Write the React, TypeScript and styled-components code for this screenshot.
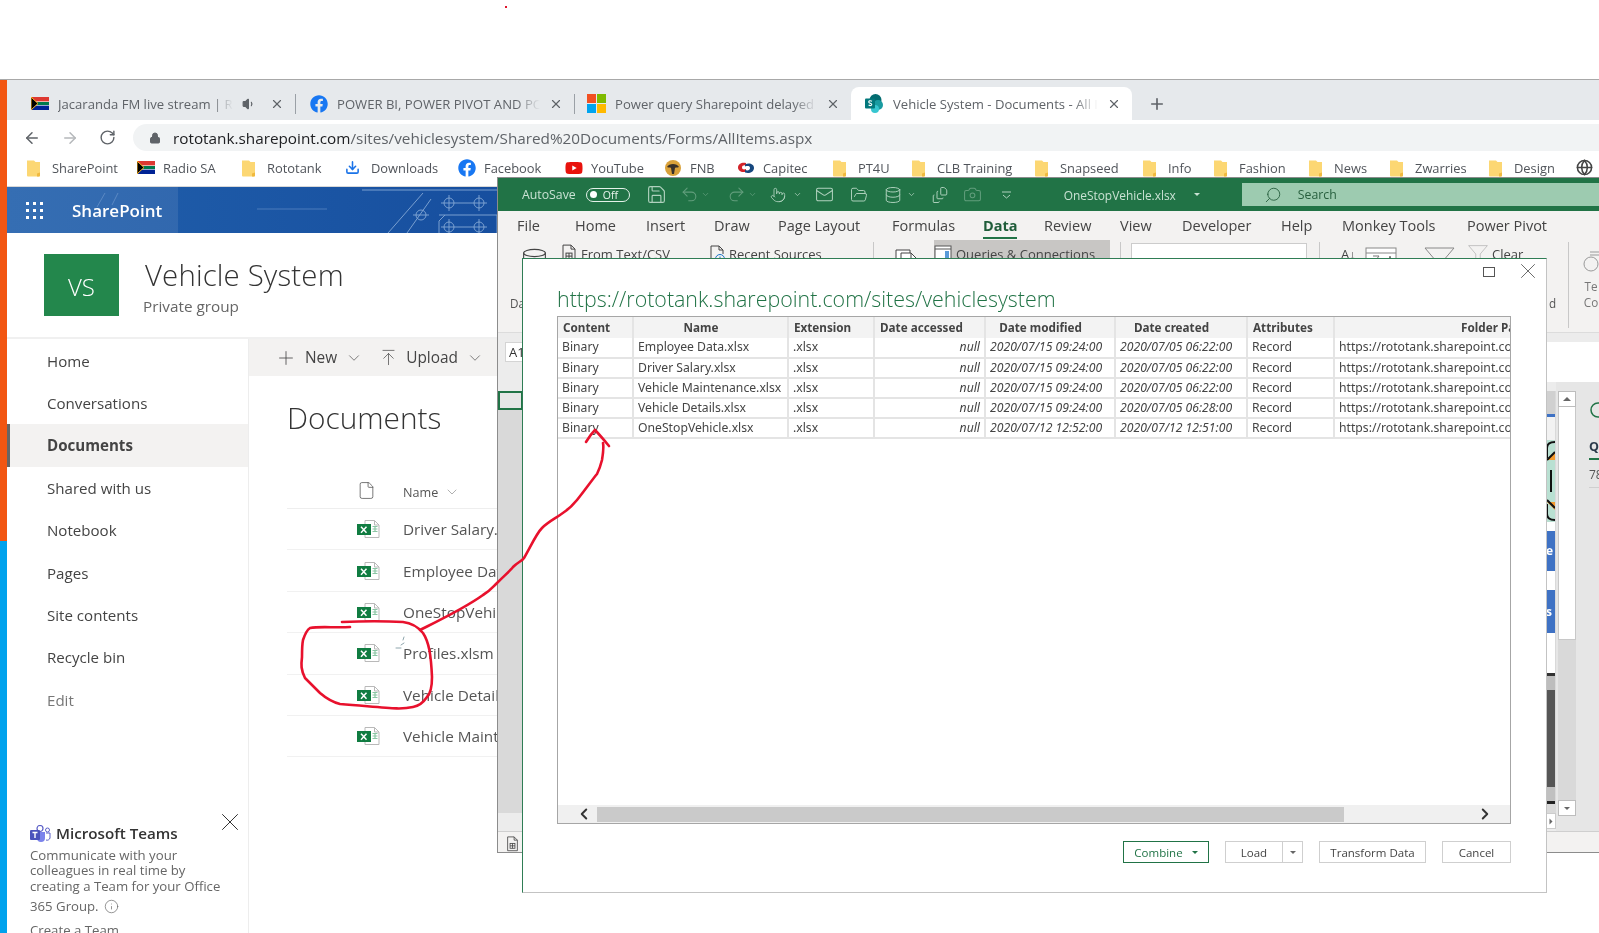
import React from "react";
import styled, { createGlobalStyle } from "styled-components";
import { FaFacebook, FaYoutube } from "react-icons/fa";
import { Save, Undo2, Redo2, Pointer, Mail, FolderOpen, Database, Camera, FileStack, Search, ArrowLeft, ArrowRight, RotateCw, Lock, Plus, X, ChevronDown, ChevronLeft, ChevronRight, ArrowUpToLine, File as FileIcon, Info, Volume1, Globe, Download } from "lucide-react";

const Global = createGlobalStyle`
  html, body { margin: 0; padding: 0; background: #fff; }
  body { font-family: "Open Sans", "Noto Sans", sans-serif; color: #333; }
  * { box-sizing: border-box; }
`;

const Page = styled.div`position: relative; width: 1599px; height: 933px; overflow: hidden; background: #fff; filter: blur(0.35px);`;
const TopGap = styled.div`height: 80px; border-bottom: 1px solid #a8a8a8;`;
const Browser = styled.div`display: flex; height: 853px;`;
const Strip = styled.div`width: 7px; flex: none; background: linear-gradient(#f25612 0, #f25612 461px, #00a2ed 461px);`;
const Chrome = styled.div`flex: 1; display: flex; flex-direction: column; min-width: 0;`;

const TabBar = styled.div`height: 40px; flex: none; background: #e6e9ec; display: flex; padding: 7px 0 0 9px; color: #5f6368;`;
const Tab = styled.div<{ $w: number; $pl?: number; $active?: boolean }>`
  width: ${p => p.$w}px; height: 33px; flex: none; display: flex; align-items: center; padding: 0 11px 0 ${p => p.$pl ?? 15}px; gap: 9px; position: relative;
  background: ${p => (p.$active ? "#fff" : "transparent")}; border-radius: 8px 8px 0 0; font-size: 13.1px;
`;
const TabSep = styled.div`width: 1px; height: 20px; background: #9aa0a6; flex: none; margin-top: 7px;`;
const TabTitle = styled.div`flex: 1; white-space: nowrap; overflow: hidden; min-width: 0; -webkit-mask-image: linear-gradient(90deg, #000 88%, transparent); mask-image: linear-gradient(90deg, #000 88%, transparent);`;
const NewTab = styled.div`display: flex; align-items: center; height: 33px; margin-left: 16px; color: #5f6368;`;

const Toolbar = styled.div`height: 35px; flex: none; display: flex; align-items: center; padding-left: 16px; gap: 20px; color: #5f6368;`;
const Omni = styled.div`flex: 1; height: 27px; margin-left: -3px; background: #f1f3f4; border-radius: 14px 0 0 14px; display: flex; align-items: center; padding-left: 16px; gap: 12px; font-size: 15.3px; white-space: nowrap; color: #5f6368;`;
const Host = styled.span`color: #202124;`;

const Bookmarks = styled.div`height: 32px; flex: none; display: flex; align-items: center; padding: 0 0 6px 19px; font-size: 12.9px; color: #50545a; border-bottom: 1px solid #d8d8d8;`;
const Bookmark = styled.div<{ $w: number }>`width: ${p => p.$w}px; flex: none; display: flex; align-items: center; gap: 8px; white-space: nowrap;`;
const BmIcon = styled.span`width: 18px; height: 18px; display: flex; align-items: center; flex: none;`;

const SpBar = styled.div`position: relative; height: 46px; flex: none; overflow: hidden; background: #1c5aa8; display: flex; align-items: center; color: #fff;`;
const SpArt = styled.svg`position: absolute; inset: 0; width: 100%; height: 100%;`;
const Waffle = styled.div`position: relative; display: grid; grid-template-columns: repeat(3, 3px); gap: 4px; margin-left: 19px;`;
const Dot = styled.i`width: 3px; height: 3px; background: #fff; display: block;`;
const SpName = styled.div`position: relative; margin-left: 29px; font-size: 17px; font-weight: 600;`;

const SiteHead = styled.div`height: 106px; flex: none; display: flex; align-items: flex-start; padding: 21px 0 0 37px; border-bottom: 2px solid #f0f0f0;`;
const Tile = styled.div`width: 75px; height: 62px; background: #23874c; color: #fff; font-size: 24px; font-weight: 300; display: flex; align-items: center; justify-content: center; flex: none; padding-top: 2px;`;
const SiteText = styled.div`margin-left: 26px; padding-top: 2px;`;
const SiteTitle = styled.div`font-size: 29.4px; font-weight: 300; line-height: 39px; color: #333; letter-spacing: .15px;`;
const SiteSub = styled.div`font-size: 15.3px; color: #666; line-height: 20px; margin: 1px 0 0 -2px;`;

const Body = styled.div`flex: 1; display: flex; min-height: 0;`;
const Nav = styled.nav`width: 242px; flex: none; border-right: 1px solid #ededed; display: flex; flex-direction: column; padding-top: .5px;`;
const NavItem = styled.div<{ $on?: boolean; $muted?: boolean }>`
  height: 42.4px; flex: none; display: flex; align-items: center; padding-left: ${p => (p.$on ? 37 : 40)}px; font-size: 15.1px;
  color: ${p => (p.$muted ? "#777" : "#444")}; font-weight: ${p => (p.$on ? 700 : 400)}; background: ${p => (p.$on ? "#f3f2f1" : "transparent")};
  border-left: ${p => (p.$on ? "3px solid #666" : "none")};
`;
const Teams = styled.div`position: relative; margin: 103px 0 0 23px; font-size: 13.2px; line-height: 15.4px; color: #666;`;
const TeamsHead = styled.div`display: flex; align-items: center; gap: 5px; font-size: 15.2px; font-weight: 600; color: #333; height: 20px; margin-bottom: 4px;`;
const TeamsClose = styled.span`position: absolute; right: 3px; top: -17px; color: #333; display: flex;`;
const InfoLine = styled.div`display: flex; align-items: center; gap: 5px; margin-top: 5px;`;
const CreateLink = styled.div`margin-top: 8px;`;

const Main = styled.div`flex: 1; min-width: 0;`;
const Cmd = styled.div`height: 37px; background: #f3f2f1; display: flex; align-items: center; padding-left: 26px; font-size: 15.4px; color: #333;`;
const CmdBtn = styled.div<{ $ml?: number }>`display: flex; align-items: center; margin-left: ${p => p.$ml ?? 0}px; gap: 8px; color: #444;`;
const DocTitle = styled.div`font-size: 29.8px; font-weight: 300; color: #333; line-height: 38px; padding: 23px 0 0 38px; height: 105px;`;
const ListHead = styled.div`height: 28px; margin-left: 38px; display: flex; align-items: flex-start; font-size: 12.6px; color: #555; border-bottom: 1px solid #eee; padding-left: 70px;`;
const ListName = styled.div`margin-left: 27px; display: flex; align-items: center; gap: 6px; height: 18px; margin-top: 2px;`;
const FileRow = styled.div`height: 41.4px; margin-left: 38px; display: flex; align-items: center; border-bottom: 1px solid #f1f1f1; padding-left: 70px; font-size: 15.3px; color: #555; white-space: nowrap;`;
const FileName = styled.div`margin-left: 23px;`;

/* Excel window */
const Excel = styled.div`position: absolute; left: 497px; top: 177px; width: 1102px; height: 676px; border: 1px solid #8c8c8c; border-right: 0; background: #f3f2f1; display: flex; flex-direction: column;`;
const XTitle = styled.div`height: 33px; flex: none; background: #217346; display: flex; align-items: center; color: #c9e2d3; font-size: 12.3px; padding-left: 24px; white-space: nowrap;`;
const Toggle = styled.div`width: 44px; height: 14px; border: 1.5px solid #e4f1e9; border-radius: 8px; margin-left: 10px; display: flex; align-items: center; padding-left: 3px; font-size: 10.5px; color: #e9f4ed; gap: 6px;`;
const Knob = styled.i`width: 7px; height: 7px; background: #fff; border-radius: 50%; display: block;`;
const TIcon = styled.span<{ $x: number; $dim?: boolean }>`margin-left: ${p => p.$x}px; display: flex; opacity: ${p => (p.$dim ? 0.38 : 0.85)};`;
const XFile = styled.div`margin-left: 52px; display: flex; align-items: center; gap: 18px; width: 178px; flex: none; font-size: 11.9px;`;
const Caret = styled.i`width: 0; height: 0; border-left: 3.5px solid transparent; border-right: 3.5px solid transparent; border-top: 3.5px solid currentColor; display: block;`;
const XSearch = styled.div`flex: 1; height: 23px; background: #9dcbb0; display: flex; align-items: center; padding-left: 22px; gap: 16px; color: #28603f; font-size: 12.3px;`;
const XTabs = styled.div`height: 29px; flex: none; display: flex; align-items: center; padding-left: 19px; font-size: 14.5px; color: #444;`;
const XTab = styled.div<{ $w: number; $on?: boolean }>`width: ${p => p.$w}px; flex: none; white-space: nowrap; position: relative; font-weight: ${p => (p.$on ? 700 : 400)}; color: ${p => (p.$on ? "#1f5d3a" : "#444")};
  &::after { content: ""; display: ${p => (p.$on ? "block" : "none")}; position: absolute; left: 0; top: 21px; width: 34px; height: 2px; background: #217346; }
`;
const Ribbon = styled.div`height: 92px; flex: none; display: flex; align-items: flex-start; padding-left: 21px; font-size: 13px; color: #444; white-space: nowrap; position: relative; box-shadow: 0 1px 0 #dcdcdc;`;
const RItem = styled.div<{ $x?: number; $w: number; $on?: boolean }>`margin-left: ${p => p.$x ?? 0}px; width: ${p => p.$w}px; flex: none; height: 22px; display: flex; align-items: center; gap: 4px; background: ${p => (p.$on ? "#c8c6c4" : "transparent")}; padding-top: 6px;`;
const RBig = styled.div<{ $x?: number; $w: number }>`margin-left: ${p => p.$x ?? 0}px; width: ${p => p.$w}px; flex: none; padding-top: 7px;`;
const RSep = styled.div<{ $x: number }>`margin-left: ${p => p.$x}px; width: 1px; height: 86px; background: #c8c8c8; flex: none; margin-top: 2px;`;
const RBox = styled.div<{ $x: number; $w: number }>`margin-left: ${p => p.$x}px; width: ${p => p.$w}px; height: 40px; border: 1px solid #ccc; background: #fff; margin-top: 3px; flex: none;`;
const RLabel = styled.div`position: absolute; left: 12px; top: 55px; font-size: 11.7px; color: #555;`;
const RLabelEnd = styled.div`position: absolute; left: 1051px; top: 55px; font-size: 11.7px; color: #555;`;
const RSide = styled.div`position: absolute; left: 1078px; top: 11px; font-size: 11.7px; line-height: 16px; color: #777; width: 30px; text-align: center;`;
const Formula = styled.div`height: 50px; flex: none; background: #ececec; display: flex; padding-top: 10px;`;
const NameBox = styled.div`width: 40px; height: 20px; margin-left: 7px; background: #fff; border: 1px solid #d4d4d4; font-size: 13px; padding-left: 3px; line-height: 18px;`;
const FormulaInput = styled.div`flex: 1; height: 40px; margin-left: 8px; background: #fff;`;
const Grid = styled.div`height: 449px; flex: none; display: flex; background: #e6e6e6;`;
const Sheet = styled.div`width: 1058px; flex: none; display: flex; flex-direction: column; background: #d9d9d9; position: relative;`;
const Corner = styled.div`height: 9px; background: #ececec;`;
const SelCell = styled.div`height: 19px; width: 25px; border: 2px solid #217346; background: #e6e6e6; flex: none;`;
const SheetBottom = styled.div`margin-top: auto; height: 18px; background: #ececec; flex: none; display: flex; justify-content: flex-end;`;
const SheetNext = styled.div`width: 11px; height: 16px; margin-right: 0; background: #fff; border: 1px solid #ccc; color: #666; display: flex; align-items: center; justify-content: center;`;
const ThumbCol = styled.div`position: absolute; left: 1048px; top: 9px; width: 9px; display: flex; flex-direction: column; align-items: stretch; overflow: hidden;`;
const Thumb = styled.div<{ $h: number; $c: string }>`height: ${p => p.$h}px; background: ${p => p.$c}; flex: none; color: #fff; font-weight: 700; font-size: 12px; line-height: ${p => p.$h}px;`;
const VBar = styled.div`width: 18px; flex: none; margin: 9px 0 0 2px; height: 425px; background: #d9d9d9; display: flex; flex-direction: column;`;
const VBtn = styled.div<{ $end?: boolean }>`height: 16px; background: #fff; border: 1px solid #bdbdbd; display: flex; align-items: center; justify-content: center; color: #666; flex: none; margin-top: ${p => (p.$end ? "auto" : "0")};`;
const VThumb = styled.div`height: 233px; background: #fff; border: 1px solid #c8c8c8; border-top: 0; flex: none;`;
const UpCaret = styled.i`width: 0; height: 0; border-left: 4px solid transparent; border-right: 4px solid transparent; border-bottom: 4px solid currentColor; display: block;`;
const QPanel = styled.div`flex: 1; padding: 20px 0 0 13px; font-size: 12.5px; color: #333; overflow: hidden; white-space: nowrap;`;
const QBold = styled.div`font-weight: 700; margin-top: 18px; line-height: 14px; color: #2b3a4a; border-bottom: 2px solid #217346; width: 22px; padding-bottom: 4px;`;
const QNum = styled.div`margin-top: 6px; color: #555; font-size: 12px; border-bottom: 1px solid #cfcfcf; padding-bottom: 4px;`;
const QTile = styled.div`margin: 32px 0 0 10px; width: 6px; height: 48px; background: #c8ecd8;`;
const Status = styled.div`flex: 1; background: #f3f2f1; border-top: 1px solid #cfcfcf; padding: 4px 0 0 8px; display: flex;`;

/* Dialog */
const Dialog = styled.div`position: absolute; left: 522px; top: 258px; width: 1025px; height: 635px; background: #fff; border: 1px solid #2f7d55; border-right-color: #c3c3c3; border-bottom-color: #c3c3c3; display: flex; flex-direction: column; padding: 0 35px 0 34px;`;
const WinCtl = styled.div`height: 25px; flex: none; margin-right: -30px; display: flex; justify-content: flex-end; align-items: flex-end; gap: 20px; color: #555;`;
const MaxBox = styled.i`width: 12px; height: 10px; border: 1px solid #555; display: block; margin-bottom: 7px;`;
const DlgTitle = styled.div`font-size: 21.4px; font-weight: 300; color: #217346; line-height: 30px; height: 32px; white-space: nowrap;`;
const TableBox = styled.div`height: 508px; flex: none; border: 1px solid #a6a6a6; display: flex; flex-direction: column; overflow: hidden;`;
const TableClip = styled.div`flex: 1; overflow: hidden; min-height: 0;`;
const DataTable = styled.table`border-collapse: collapse; table-layout: fixed; width: 1117px; font-family: "Noto Sans", "Open Sans", sans-serif; font-size: 12.2px; color: #444;`;
const Th = styled.th<{ $left?: boolean }>`height: 21px; padding: 0 ${p => (p.$left ? 5 : 24)}px 2px 5px; background: #f3f3f3; border-right: 2px solid #e4e4e4; font-weight: 700; font-size: 11.7px; line-height: 14px; text-align: ${p => (p.$left ? "left" : "center")}; color: #444; white-space: nowrap; overflow: hidden;`;
const Td = styled.td<{ $it?: boolean; $right?: boolean }>`height: 20px; padding: 0 4px 1px; line-height: 14px; border-right: 2px solid #e4e4e4; border-bottom: 2px solid #e4e4e4; white-space: nowrap; overflow: hidden; font-style: ${p => (p.$it ? "italic" : "normal")}; text-align: ${p => (p.$right ? "right" : "left")};`;
const HBar = styled.div`height: 18px; flex: none; background: #f0f0f0; display: flex; align-items: center; color: #333;`;
const HBtn = styled.span<{ $w: number; $pl?: number }>`width: ${p => p.$w}px; padding-left: ${p => p.$pl ?? 0}px; flex: none; display: flex; justify-content: center;`;
const HThumb = styled.div`width: 747px; height: 15px; background: #cacaca; flex: none;`;
const HFill = styled.div`flex: 1;`;
const Footer = styled.div`margin-top: 17px; display: flex; justify-content: flex-end; gap: 16px; font-size: 11.5px; color: #444;`;
const Btn = styled.div<{ $w: number; $primary?: boolean }>`width: ${p => p.$w}px; height: 22px; flex: none; display: flex; align-items: center; justify-content: center; gap: 9px; border: 1px solid ${p => (p.$primary ? "#217346" : "#cfcfcf")}; color: ${p => (p.$primary ? "#217346" : "#444")}; background: #fff;`;
const SplitBtn = styled.div`display: flex; flex: none;`;
const SplitCaret = styled.div`width: 21px; height: 22px; margin-left: -1px; border: 1px solid #cfcfcf; display: flex; align-items: center; justify-content: center; color: #666;`;
const Scribble = styled.svg`position: absolute; left: 0; top: 0; width: 1599px; height: 933px; pointer-events: none;`;
const RedDot = styled.i`position: absolute; left: 505px; top: 6px; width: 2px; height: 2px; background: #e0142d; display: block;`;

const Folder = () => (
  <svg width="15" height="18" viewBox="0 0 15 18"><path d="M1 1.5h7l1.5 1.5h4.5v13.5a1 1 0 0 1-1 1H2a1 1 0 0 1-1-1z" fill="#fcd773" /><path d="M11 17.5h2a1 1 0 0 0 1-1v-3l-3 1z" fill="#f0b93f" /></svg>
);
const SaFlag = () => (
  <svg width="18" height="13" viewBox="0 0 18 13"><rect width="18" height="13" fill="#fff" /><rect width="18" height="4.4" fill="#de3831" /><rect y="8.6" width="18" height="4.4" fill="#002395" /><rect y="5" width="18" height="3" fill="#007a4d" /><path d="M0 0l7 6.5L0 13z" fill="#000" stroke="#ffb81c" strokeWidth="1" /></svg>
);
const MsLogo = () => (
  <svg width="19" height="19" viewBox="0 0 19 19"><rect width="9" height="9" fill="#f25022" /><rect x="10" width="9" height="9" fill="#7fba00" /><rect y="10" width="9" height="9" fill="#00a4ef" /><rect x="10" y="10" width="9" height="9" fill="#ffb900" /></svg>
);
const SpLogo = () => (
  <svg width="19" height="19" viewBox="0 0 19 19"><circle cx="10.5" cy="6" r="6" fill="#036c70" /><circle cx="13" cy="11" r="5" fill="#1a9ba1" /><circle cx="10" cy="15" r="4" fill="#37c6d0" /><rect x="0" y="4.5" width="10" height="10" rx="1" fill="#03787c" /><path d="M7 7.2c-2-1-3.6-.2-3.2 1 .4 1.1 3 1 3 2.3 0 1.2-1.8 1.4-3.2.6" stroke="#fff" strokeWidth="1.1" fill="none" /></svg>
);
const FnbLogo = () => (
  <svg width="18" height="18" viewBox="0 0 18 18"><circle cx="9" cy="9" r="8" fill="#d9a13a" /><path d="M3 8c2-4 10-4 12 0-2 1-3 0-4 1l-1 6H8L7 9C6 8 5 9 3 8z" fill="#38302a" /></svg>
);
const CapLogo = () => (
  <svg width="18" height="12" viewBox="0 0 18 12"><path d="M9 1C5 0 1 2 1 5.500S5 11 9 9.500V7C7 8 5 7.500 5 5.500S7 3 9 3.500z" fill="#d2232a" /><path d="M8 2.500c4-2 9-.5 9 3.500s-5 6-9 4.500V8c3 1 5 0 5-2s-2-2.500-5-1.500z" fill="#16477e" /></svg>
);
const XlsIcon = () => (
  <svg width="23" height="18" viewBox="0 0 23 18">
    <path d="M8 .5h9.500l4.500 4.500v12.500H8z" fill="#fff" stroke="#b9b9b9" /><path d="M17.500.5V5H22" fill="none" stroke="#b9b9b9" />
    <path d="M15.500 6.500h5M15.500 9h5M15.500 11.500h5M18 6v6" stroke="#8ac6a4" strokeWidth="1.200" />
    <rect x="0" y="4" width="14" height="11" fill="#107c41" />
    <path d="M4 6.800l5.500 6M9.500 6.800l-5.500 6" stroke="#fff" strokeWidth="1.500" />
  </svg>
);
const TeamsLogo = () => (
  <svg width="21" height="19" viewBox="0 0 21 19"><circle cx="10" cy="3.500" r="3" fill="none" stroke="#5b5fc7" strokeWidth="1.200" /><circle cx="17.500" cy="5" r="2" fill="none" stroke="#5b5fc7" /><path d="M7 7h8v6a4 4 0 0 1-8 0z" fill="#7b83eb" /><path d="M16 8h4v5a3 3 0 0 1-4 2" fill="none" stroke="#5b5fc7" /><rect x="0" y="5" width="10" height="10" rx="1" fill="#4b53bc" /><path d="M2.500 7.500h5M5 7.500v5.500" stroke="#fff" strokeWidth="1.400" /></svg>
);
const DocLines = ({ s = 16, c = "#444" }: { s?: number; c?: string }) => (
  <svg width={s} height={s * 1.2} viewBox="0 0 16 19" fill="none" stroke={c}><path d="M2 18V1h8l4 4v13z" /><path d="M10 1v4h4" /><rect x="5" y="9" width="6" height="6" /><path d="M5 12h6M8 9v6" /></svg>
);
const RecentDoc = () => (
  <svg width="16" height="19" viewBox="0 0 16 19" fill="none" stroke="#444"><path d="M2 18V1h8l4 4v4" /><path d="M10 1v4h4" /><circle cx="11" cy="14" r="4.500" stroke="#1a73c8" /><path d="M11 11.500V14h2" stroke="#1a73c8" /></svg>
);
const SheetsIcon = () => (
  <svg width="26" height="30" viewBox="0 0 26 30" fill="none" stroke="#444"><path d="M1 3h14v26H1z" fill="#fff" /><path d="M6 6h10l7 7v16H6z" fill="#fff" /><path d="M16 6v7h7" /></svg>
);
const QueryIcon = () => (
  <svg width="18" height="19" viewBox="0 0 18 19" fill="#fff" stroke="#555"><rect x="1" y="1" width="16" height="17" /><path d="M1 4h16" /><rect x="11" y="6" width="4" height="10" fill="#5a9bd8" stroke="none" /></svg>
);
const SortBox = () => (
  <svg width="32" height="30" viewBox="0 0 32 30" fill="#fff" stroke="#888"><rect x="1" y="1" width="30" height="28" /><path d="M1 6h30" /><path d="M8 9h6M14 9l-6 8h6M22 18l3-9 3 9M23 15h4" fill="none" stroke="#777" /></svg>
);
const FunnelIcon = ({ w = 31, c = "#888" }: { w?: number; c?: string }) => (
  <svg width={w} height="28" viewBox="0 0 31 28" fill="none" stroke={c}><path d="M1 1h29L19 14v13l-7-4v-9z" /></svg>
);
const QatMenu = () => (
  <svg width="11" height="8" viewBox="0 0 11 8" stroke="#c9e2d3" fill="none"><path d="M1 1h9" /><path d="M2 4l3.500 3L9 4" /></svg>
);
const Tangle = () => (
  <svg width="9" height="82" viewBox="0 0 9 82">
    <rect width="9" height="82" fill="#b9e0d2" />
    <path d="M9 12L1 20h8zM9 62l-8 0 8 8z" fill="#f49a2e" />
    <path d="M9 2C4 2 1 4 1 8v10M5 30v22M1 64v10c0 4 3 6 8 6M9 12L1 20M9 68L1 60" stroke="#111" strokeWidth="2" fill="none" />
  </svg>
);

const marks: [string, number, React.ReactNode][] = [
  ["SharePoint", 111, <Folder />], ["Radio SA", 104, <SaFlag />], ["Rototank", 104, <Folder />],
  ["Downloads", 113, <Download size={15} color="#1a73e8" strokeWidth={2.5} />], ["Facebook", 107, <FaFacebook size={18} color="#1877f2" />],
  ["YouTube", 99, <FaYoutube size={18} color="#e8120c" />], ["FNB", 73, <FnbLogo />], ["Capitec", 95, <CapLogo />],
  ["PT4U", 79, <Folder />], ["CLB Training", 123, <Folder />], ["Snapseed", 108, <Folder />], ["Info", 71, <Folder />],
  ["Fashion", 95, <Folder />], ["News", 81, <Folder />], ["Zwarries", 99, <Folder />], ["Design", 88, <Folder />],
];
const navs = ["Home", "Conversations", "Documents", "Shared with us", "Notebook", "Pages", "Site contents", "Recycle bin", "Edit"];
const files = ["Driver Salary.xlsx", "Employee Data.xlsx", "OneStopVehicle.xlsx", "Profiles.xlsm", "Vehicle Details.xlsx", "Vehicle Maintenance.xlsx"];
const xtabs: [string, number][] = [["File", 58], ["Home", 71], ["Insert", 68], ["Draw", 64], ["Page Layout", 114], ["Formulas", 91], ["Data", 61], ["Review", 76], ["View", 62], ["Developer", 99], ["Help", 61], ["Monkey Tools", 125], ["Power Pivot", 110]];
const rows = [
  ["Employee Data.xlsx", "2020/07/15 09:24:00", "2020/07/05 06:22:00"],
  ["Driver Salary.xlsx", "2020/07/15 09:24:00", "2020/07/05 06:22:00"],
  ["Vehicle Maintenance.xlsx", "2020/07/15 09:24:00", "2020/07/05 06:22:00"],
  ["Vehicle Details.xlsx", "2020/07/15 09:24:00", "2020/07/05 06:28:00"],
  ["OneStopVehicle.xlsx", "2020/07/12 12:52:00", "2020/07/12 12:51:00"],
];
const cols = [75, 155, 86, 111, 130, 132, 87, 340];
const S = { strokeWidth: 1.3 };

export default function App() {
  return (
    <Page>
      <Global />
      <TopGap />
      <RedDot />
      <Browser>
        <Strip />
        <Chrome>
          <TabBar>
            <Tab $w={279}><SaFlag /><TabTitle>Jacaranda FM live stream | Radio</TabTitle><Volume1 size={14} fill="#5f6368" /><X size={14} strokeWidth={2} style={{ marginLeft: 5 }} /></Tab>
            <TabSep />
            <Tab $w={278} $pl={14}><FaFacebook size={18} color="#1877f2" /><TabTitle>POWER BI, POWER PIVOT AND POWER</TabTitle><X size={14} strokeWidth={2} /></Tab>
            <TabSep />
            <Tab $w={276} $pl={12}><MsLogo /><TabTitle>Power query Sharepoint delayed refresh</TabTitle><X size={14} strokeWidth={2} /></Tab>
            <Tab $w={281} $active $pl={14}><SpLogo /><TabTitle>Vehicle System - Documents - All Items</TabTitle><X size={14} strokeWidth={2} /></Tab>
            <NewTab><Plus size={18} strokeWidth={2.2} /></NewTab>
          </TabBar>
          <Toolbar>
            <ArrowLeft size={18} />
            <ArrowRight size={18} color="#b5b8bb" />
            <RotateCw size={17} />
            <Omni><Lock size={12} fill="#5f6368" /><span><Host>rototank.sharepoint.com</Host>/sites/vehiclesystem/Shared%20Documents/Forms/AllItems.aspx</span></Omni>
          </Toolbar>
          <Bookmarks>
            {marks.map(([t, w, ic]) => (<Bookmark key={t} $w={w}><BmIcon>{ic}</BmIcon>{t}</Bookmark>))}
            <Globe size={17} color="#444" strokeWidth={2.2} />
          </Bookmarks>
          <SpBar>
            <SpArt viewBox="0 0 1592 46" preserveAspectRatio="none">
              <defs>
                <linearGradient id="bp" x1="0" x2="1"><stop offset="0" stopColor="#2160ac" /><stop offset=".3" stopColor="#174f9f" /><stop offset="1" stopColor="#1f5aa6" /></linearGradient>
              </defs>
              <rect width="1592" height="46" fill="url(#bp)" />
              <rect width="171" height="46" fill="#fff" opacity=".09" />
              <g stroke="#a8c5e6" fill="none" opacity=".75" strokeWidth=".9">
                <path d="M355 3h135M381 46l35-40M400 46l24-34M432 28h58v18M432 46V34l6-6" />
                <circle cx="442" cy="16" r="5" /><circle cx="472" cy="16" r="5" /><circle cx="414" cy="28" r="5" /><circle cx="442" cy="40" r="5" /><circle cx="472" cy="40" r="5" />
                <path d="M442 8v16M472 8v16M434 16h46M406 28h16M442 32v14M472 32v14M434 40h46" />
                <path d="M250 22h70M90 20l8-14M105 18l6-12" opacity=".5" />
              </g>
            </SpArt>
            <Waffle>{Array.from({ length: 9 }).map((_, i) => <Dot key={i} />)}</Waffle>
            <SpName>SharePoint</SpName>
          </SpBar>
          <SiteHead>
            <Tile>VS</Tile>
            <SiteText><SiteTitle>Vehicle System</SiteTitle><SiteSub>Private group</SiteSub></SiteText>
          </SiteHead>
          <Body>
            <Nav>
              {navs.map((n) => (<NavItem key={n} $on={n === "Documents"} $muted={n === "Edit"}>{n}</NavItem>))}
              <Teams>
                <TeamsHead><TeamsLogo />Microsoft Teams</TeamsHead>
                <TeamsClose><X size={30} strokeWidth={.8} /></TeamsClose>
                Communicate with your<br />colleagues in real time by<br />creating a Team for your Office
                <InfoLine>365 Group. <Info size={15} strokeWidth={1.1} /></InfoLine>
                <CreateLink>Create a Team</CreateLink>
              </Teams>
            </Nav>
            <Main>
              <Cmd>
                <CmdBtn><Plus size={22} strokeWidth={.9} />New<ChevronDown size={18} strokeWidth={.9} /></CmdBtn>
                <CmdBtn $ml={16}><ArrowUpToLine size={19} strokeWidth={.9} />Upload<ChevronDown size={18} strokeWidth={.9} /></CmdBtn>
              </Cmd>
              <DocTitle>Documents</DocTitle>
              <ListHead><FileIcon size={19} strokeWidth={1} />
                <ListName>Name<ChevronDown size={16} strokeWidth={1} color="#888" /></ListName>
              </ListHead>
              {files.map((f) => (<FileRow key={f}><XlsIcon /><FileName>{f}</FileName></FileRow>))}
            </Main>
          </Body>
        </Chrome>
      </Browser>

      <Excel>
        <XTitle>
          AutoSave
          <Toggle><Knob />Off</Toggle>
          <TIcon $x={16}><Save size={21} {...S} /></TIcon>
          <TIcon $x={13} $dim><Undo2 size={19} {...S} /></TIcon>
          <TIcon $x={2} $dim><ChevronDown size={9} /></TIcon>
          <TIcon $x={17} $dim><Redo2 size={19} {...S} /></TIcon>
          <TIcon $x={2} $dim><ChevronDown size={9} /></TIcon>
          <TIcon $x={13}><Pointer size={16} {...S} /></TIcon>
          <TIcon $x={7}><ChevronDown size={9} /></TIcon>
          <TIcon $x={13}><Mail size={19} {...S} /></TIcon>
          <TIcon $x={16}><FolderOpen size={18} {...S} /></TIcon>
          <TIcon $x={16}><Database size={18} {...S} /></TIcon>
          <TIcon $x={5}><ChevronDown size={9} /></TIcon>
          <TIcon $x={15}><FileStack size={18} {...S} /></TIcon>
          <TIcon $x={14} $dim><Camera size={19} {...S} /></TIcon>
          <TIcon $x={19}><QatMenu /></TIcon>
          <XFile>OneStopVehicle.xlsx <Caret /></XFile>
          <XSearch><Search size={18} strokeWidth={1.2} style={{ transform: "scaleX(-1)" }} />Search</XSearch>
        </XTitle>
        <XTabs>{xtabs.map(([t, w]) => (<XTab key={t} $w={w} $on={t === "Data"}>{t}</XTab>))}</XTabs>
        <Ribbon>
          <RBig $x={1} $w={41}><Database size={29} strokeWidth={.9} /></RBig>
          <RItem $w={148}><DocLines />From Text/CSV</RItem>
          <RItem $w={164}><RecentDoc />Recent Sources</RItem>
          <RSep $x={0} />
          <RBig $x={21} $w={39}><SheetsIcon /></RBig>
          <RItem $w={176} $on><QueryIcon />Queries &amp; Connections</RItem>
          <RSep $x={10} />
          <RBox $x={10} $w={176} />
          <RSep $x={12} />
          <RItem $x={21} $w={24}>A↓</RItem>
          <RBig $w={59}><SortBox /></RBig>
          <RBig $w={44}><FunnelIcon /></RBig>
          <RItem $w={100}><FunnelIcon w={20} c="#aaa" />Clear</RItem>
          <RSep $x={0} />
          <RLabel>Da</RLabel>
          <RLabelEnd>d</RLabelEnd>
          <RSide>
            <svg width="18" height="24" viewBox="0 0 18 24" fill="none" stroke="#999"><path d="M8 1h9M8 4h9" /><circle cx="9" cy="13" r="7" /></svg>
            <div>Te</div><div>Co</div>
          </RSide>
        </Ribbon>
        <Formula><NameBox>A1</NameBox><FormulaInput /></Formula>
        <Grid>
          <Sheet>
            <Corner />
            <SelCell />
            <ThumbCol>
              <Thumb $h={23} $c="#d0d0d0" /><Thumb $h={3} $c="#3f72c4" /><Thumb $h={23} $c="#f2f2f2" />
              <Tangle /><Thumb $h={9} $c="#fff" />
              <Thumb $h={40} $c="#3f72c4">e</Thumb><Thumb $h={19} $c="#fff" /><Thumb $h={43} $c="#3f72c4">s</Thumb>
              <Thumb $h={40} $c="#fff" /><Thumb $h={3} $c="#333" /><Thumb $h={14} $c="#bdbdbd" /><Thumb $h={97} $c="#565656" />
              <Thumb $h={14} $c="#c0c0c0" /><Thumb $h={3} $c="#222" />
            </ThumbCol>
            <SheetBottom><SheetNext><Caret style={{ transform: "rotate(-90deg)" }} /></SheetNext></SheetBottom>
          </Sheet>
          <VBar>
            <VBtn><UpCaret /></VBtn>
            <VThumb />
            <VBtn $end><Caret /></VBtn>
          </VBar>
          <QPanel>
            <svg width="18" height="16" viewBox="0 0 18 16"><circle cx="9" cy="8" r="7" fill="none" stroke="#217346" strokeWidth="1.500" /></svg>
            <QBold>Qu</QBold>
            <QNum>78</QNum>
            <QTile />
          </QPanel>
        </Grid>
        <Status><DocLines s={13} /></Status>
      </Excel>

      <Dialog>
        <WinCtl><MaxBox /><X size={26} strokeWidth={.8} /></WinCtl>
        <DlgTitle>https://rototank.sharepoint.com/sites/vehiclesystem</DlgTitle>
        <TableBox>
          <TableClip>
            <DataTable>
              <colgroup>{cols.map((c, i) => <col key={i} width={c} />)}</colgroup>
              <thead>
                <tr>
                  <Th $left>Content</Th><Th>Name</Th><Th $left>Extension</Th><Th $left>Date accessed</Th><Th>Date modified</Th><Th>Date created</Th><Th $left>Attributes</Th><Th>Folder Path</Th>
                </tr>
              </thead>
              <tbody>
                {rows.map(([n, m, c]) => (
                  <tr key={n}>
                    <Td>Binary</Td><Td>{n}</Td><Td>.xlsx</Td><Td $it $right>null</Td><Td $it>{m}</Td><Td $it>{c}</Td><Td>Record</Td><Td>https://rototank.sharepoint.com/sites/vehiclesystem/</Td>
                  </tr>
                ))}
              </tbody>
            </DataTable>
          </TableClip>
          <HBar>
            <HBtn $w={39} $pl={12}><ChevronLeft size={18} strokeWidth={2.6} /></HBtn>
            <HThumb />
            <HFill />
            <HBtn $w={50}><ChevronRight size={18} strokeWidth={2.6} /></HBtn>
          </HBar>
        </TableBox>
        <Footer>
          <Btn $w={86} $primary>Combine <Caret /></Btn>
          <SplitBtn><Btn $w={58}>Load</Btn><SplitCaret><Caret /></SplitCaret></SplitBtn>
          <Btn $w={107}>Transform Data</Btn>
          <Btn $w={69}>Cancel</Btn>
        </Footer>
      </Dialog>

      <Scribble viewBox="0 0 1599 933" fill="none" stroke="#e8112d" strokeWidth="2.600" strokeLinecap="round" strokeLinejoin="round">
        <path d="M342 622C365 621 385 621 403 622C412 623 418 627 423 633C429 642 431 655 432 677C432 688 430 694 427 697C423 703 419 706 413 707C400 710 390 708 340 704C332 702 327 699 320 693L305 678C301 670 301 665 302 657C302 650 302 645 303 640C305 634 307 630 310 628C320 626 335 628 350 627" />
        <path d="M420 630C440 620 465 608 483 595C490 591 492 588 497 583C505 575 510 571 513 567C518 562 522 561 524 558C530 548 536 534 542 528C548 522 556 518 560 515C568 510 573 505 577 500C585 490 592 480 597 474C600 468 601 464 602 460C603 454 604 448 603 443" />
        <path d="M586 442C589 437 592 433 595 430C599 434 604 440 609 446" />
        <g stroke="#8fa6ad" strokeWidth="1"><path d="M396 648h5M401 645l3-2M403 640l1-3" /></g>
      </Scribble>
    </Page>
  );
}
